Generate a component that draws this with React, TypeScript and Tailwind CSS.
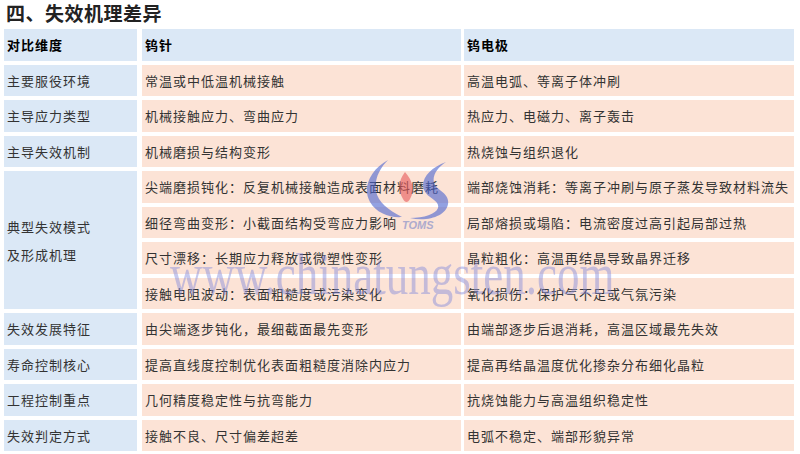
import React from "react";

const cjk = "font-['Noto_Sans_CJK_SC','Liberation_Sans',sans-serif]";

type Row = { label: string; a: string; b: string };

const before: Row[] = [
  { label: "主要服役环境", a: "常温或中低温机械接触", b: "高温电弧、等离子体冲刷" },
  { label: "主导应力类型", a: "机械接触应力、弯曲应力", b: "热应力、电磁力、离子轰击" },
  { label: "主导失效机制", a: "机械磨损与结构变形", b: "热烧蚀与组织退化" },
];

const modes: [string, string][] = [
  ["尖端磨损钝化：反复机械接触造成表面材料磨耗", "端部烧蚀消耗：等离子冲刷与原子蒸发导致材料流失"],
  ["细径弯曲变形：小截面结构受弯应力影响", "局部熔损或塌陷：电流密度过高引起局部过热"],
  ["尺寸漂移：长期应力释放或微塑性变形", "晶粒粗化：高温再结晶导致晶界迁移"],
  ["接触电阻波动：表面粗糙度或污染变化", "氧化损伤：保护气不足或气氛污染"],
];

const after: Row[] = [
  { label: "失效发展特征", a: "由尖端逐步钝化，最细截面最先变形", b: "由端部逐步后退消耗，高温区域最先失效" },
  { label: "寿命控制核心", a: "提高直线度控制优化表面粗糙度消除内应力", b: "提高再结晶温度优化掺杂分布细化晶粒" },
  { label: "工程控制重点", a: "几何精度稳定性与抗弯能力", b: "抗烧蚀能力与高温组织稳定性" },
  { label: "失效判定方式", a: "接触不良、尺寸偏差超差", b: "电弧不稳定、端部形貌异常" },
];

const blue = "bg-[#dbe8f6]";
const peach = "bg-[#fce3d6]";
const cell = "flex items-center pl-[3px] whitespace-nowrap text-[13px] tracking-[1px] text-[#333]";

function BodyRow({ r }: { r: Row }) {
  return (
    <>
      <div className={`${cell} ${blue}`}>{r.label}</div>
      <div className={`${cell} ${peach} ml-[2px]`}>{r.a}</div>
      <div className={`${cell} ${peach}`}>{r.b}</div>
    </>
  );
}

function Logo() {
  return (
    <svg width="90" height="75" viewBox="0 0 90 75" className="opacity-60">
      <path
        d="M28 2 C10 12 2 30 10 44 C16 55 30 60 42 59 C28 52 18 44 16 33 C14 21 20 10 28 2 Z"
        fill="#4a63d0"
      />
      <path
        d="M86 4 C70 10 60 21 64 32 C68 41 80 42 78 50 C76 56 64 60 50 60 C68 64 86 58 88 46 C90 35 76 32 74 25 C72 17 78 9 86 4 Z"
        fill="#4a63d0"
      />
      <path
        d="M45 14 C38 23 38 32 43 41 C45 45 48 45 50 41 C55 32 53 23 45 14 Z"
        fill="#e8585a"
      />
      <text
        x="42"
        y="71"
        fontFamily="Liberation Sans, sans-serif"
        fontStyle="italic"
        fontWeight="bold"
        fontSize="11"
        fill="#7a86c8"
      >
        TOMS
      </text>
    </svg>
  );
}

export default function App() {
  return (
    <div className={`relative h-[454px] w-[800px] overflow-hidden bg-white ${cjk}`}>
      <div className="flex h-[29px] items-center pl-[6px] pb-[3px] text-[19px] leading-[24px] font-bold tracking-[0.5px] text-[#222]">
        四、失效机理差异
      </div>
      <div className="grid grid-cols-[133px_321px_330px] auto-rows-[31.5px] gap-x-[3px] gap-y-1 px-[4px]">
        <div className={`${cell} ${blue} font-bold text-black`}>对比维度</div>
        <div className={`${cell} ${blue} ml-[2px] font-bold text-black`}>钨针</div>
        <div className={`${cell} ${blue} font-bold text-black`}>钨电极</div>
        {before.map((r) => (
          <BodyRow key={r.label} r={r} />
        ))}
        <div className={`row-span-4 flex flex-col justify-center pl-[3px] pt-[2px] text-[13px] leading-[28px] tracking-[1px] text-[#333] ${blue}`}>
          <span>典型失效模式</span>
          <span>及形成机理</span>
        </div>
        {modes.map(([a, b], i) => (
          <React.Fragment key={i}>
            <div className={`${cell} ${peach} col-start-2 ml-[2px]`}>{a}</div>
            <div className={`${cell} ${peach}`}>{b}</div>
          </React.Fragment>
        ))}
        {after.map((r) => (
          <BodyRow key={r.label} r={r} />
        ))}
      </div>

      <div className="pointer-events-none absolute left-[360px] top-[158px]">
        <Logo />
      </div>
      <div className="pointer-events-none absolute left-[170px] top-[244px] origin-left scale-x-[0.75] whitespace-nowrap font-['Liberation_Serif',serif] text-[60px] leading-none text-[#8088dc]/45">
        www.chinatungsten.com
      </div>
    </div>
  );
}
